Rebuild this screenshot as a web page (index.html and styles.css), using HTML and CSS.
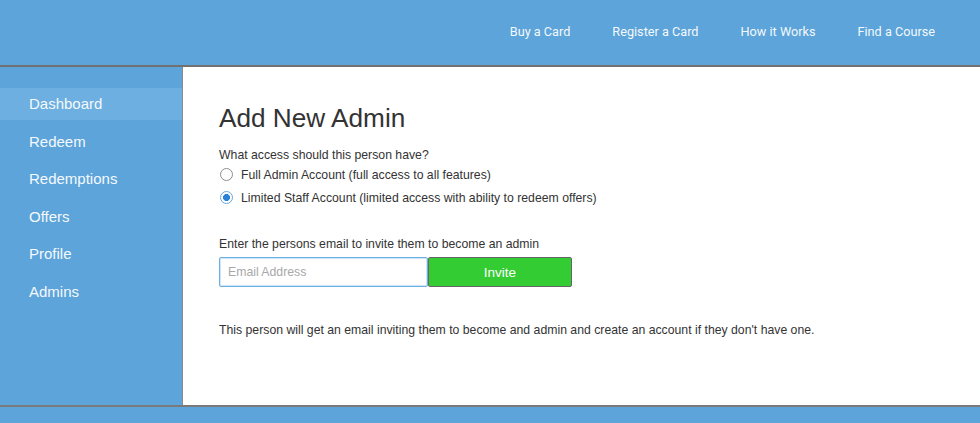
FILE: index.html
```html
<!DOCTYPE html>
<html>
<head>
<meta charset="utf-8">
<link rel="stylesheet" href="styles.css">
</head>
<body>
<header class="topbar">
  <nav class="topnav">
    <a href="#">Buy a Card</a>
    <a href="#">Register a Card</a>
    <a href="#">How it Works</a>
    <a href="#">Find a Course</a>
  </nav>
</header>
<div class="main">
  <aside class="sidebar">
    <a class="side-item active" href="#">Dashboard</a>
    <a class="side-item" href="#">Redeem</a>
    <a class="side-item" href="#">Redemptions</a>
    <a class="side-item" href="#">Offers</a>
    <a class="side-item" href="#">Profile</a>
    <a class="side-item" href="#">Admins</a>
  </aside>
  <section class="content">
    <h1 class="title">Add New Admin</h1>
    <p class="question">What access should this person have?</p>
    <label class="radio-row"><input type="radio" name="access" class="radio"> Full Admin Account (full access to all features)</label>
    <label class="radio-row"><input type="radio" name="access" class="radio" checked> Limited Staff Account (limited access with ability to redeem offers)</label>
    <p class="email-label">Enter the persons email to invite them to become an admin</p>
    <div class="invite">
      <input class="email" type="text" placeholder="Email Address">
      <button class="invite-btn">Invite</button>
    </div>
    <p class="note">This person will get an email inviting them to become and admin and create an account if they don't have one.</p>
  </section>
</div>
<footer class="footer"></footer>
</body>
</html>
```
FILE: styles.css
```css
html, body {
  margin: 0;
  padding: 0;
  background: #5ca4da;
  font-family: "Liberation Sans", Arial, sans-serif;
  height: 423px;
  overflow: hidden;
}
.topbar {
  height: 65px;
  background: #5ca4da;
  border-bottom: 2px solid #717171;
  display: flex;
  justify-content: flex-end;
  align-items: center;
}
.topnav {
  display: flex;
  padding-right: 24px;
  padding-bottom: 2px;
}
.topnav a {
  font-family: Roboto, "Liberation Sans", sans-serif;
  font-size: 12.7px;
  color: #f4f8fc;
  text-decoration: none;
  padding: 0 21px;
}
.main {
  display: flex;
  height: 338px;
  border-bottom: 2px solid #7a7a7a;
}
.sidebar {
  width: 182px;
  background: #5ca4da;
  border-right: 1px solid #8a8a8a;
  padding-top: 21px;
  display: flex;
  flex-direction: column;
  gap: 5.5px;
  box-sizing: content-box;
}
.side-item {
  height: 32px;
  line-height: 32px;
  padding-left: 29px;
  font-size: 15px;
  color: #f5f9fd;
  text-decoration: none;
}
.side-item.active {
  background: #6cafe0;
}
.content {
  flex: 1;
  background: #ffffff;
  padding: 36px 36px 0 36px;
  color: #333333;
}
.title {
  font-size: 26.2px;
  font-weight: normal;
  line-height: 30px;
  margin: 0;
  color: #333333;
}
.question {
  font-size: 12.25px;
  line-height: 14px;
  margin: 15px 0 0 0;
}
.radio-row {
  display: flex;
  align-items: center;
  font-size: 12.25px;
  height: 23px;
  margin-top: 1px;
  margin-bottom: -1px;
}
.radio {
  appearance: none;
  -webkit-appearance: none;
  width: 13px;
  height: 13px;
  border: 1px solid #8f8f8f;
  border-radius: 50%;
  margin: 0 8px 0 1px;
  box-sizing: border-box;
  background: #fff;
}
.radio:checked {
  border-color: #6aa7dc;
  background: radial-gradient(circle, #2a82d8 0 3.2px, #ffffff 3.8px);
}
.email-label {
  font-size: 12.25px;
  line-height: 14px;
  margin: 29px 0 6px 0;
}
.invite {
  display: flex;
  height: 30px;
}
.email {
  width: 209px;
  height: 30px;
  box-sizing: border-box;
  border: 1px solid #6fb0e3;
  box-shadow: inset 0 0 0 1px #cfe5f6;
  border-radius: 2px;
  padding: 0 8px;
  font-family: "Liberation Sans", Arial, sans-serif;
  font-size: 12.25px;
  color: #333;
  outline: none;
}
.email::placeholder {
  color: #a8a8a8;
}
.invite-btn {
  width: 144px;
  height: 30px;
  box-sizing: border-box;
  background: #33cc33;
  border: 1px solid #666;
  border-radius: 2px;
  color: #ffffff;
  font-family: "Liberation Sans", Arial, sans-serif;
  font-size: 13.5px;
  padding: 0;
}
.note {
  font-size: 12.25px;
  line-height: 14px;
  margin: 36px 0 0 0;
}
.footer {
  height: 16px;
  background: #5ca4da;
}
```
